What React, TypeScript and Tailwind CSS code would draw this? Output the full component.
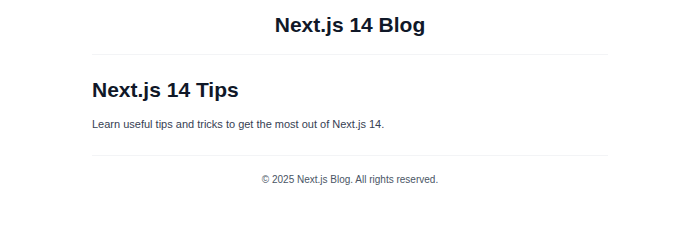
export default function App() {
  return (
    <div className="min-h-screen bg-white font-['Liberation_Sans',Arial,sans-serif]">
      <div className="max-w-[516px] mx-auto">
        <header className="pt-[11px] pb-[15px] border-b border-gray-100 text-center">
          <h1 className="text-[21px] leading-7 font-bold text-gray-900">Next.js 14 Blog</h1>
        </header>

        <main className="pt-[21px] pb-[21px]">
          <h2 className="text-[21px] leading-7 font-bold text-gray-900">Next.js 14 Tips</h2>
          <p className="mt-2.5 text-[11px] leading-5 text-gray-700">
            Learn useful tips and tricks to get the most out of Next.js 14.
          </p>
        </main>

        <footer className="border-t border-gray-100 pt-4 pb-4 text-center">
          <p className="text-[10px] leading-4 text-gray-600">© 2025 Next.js Blog. All rights reserved.</p>
        </footer>
      </div>
    </div>
  );
}
